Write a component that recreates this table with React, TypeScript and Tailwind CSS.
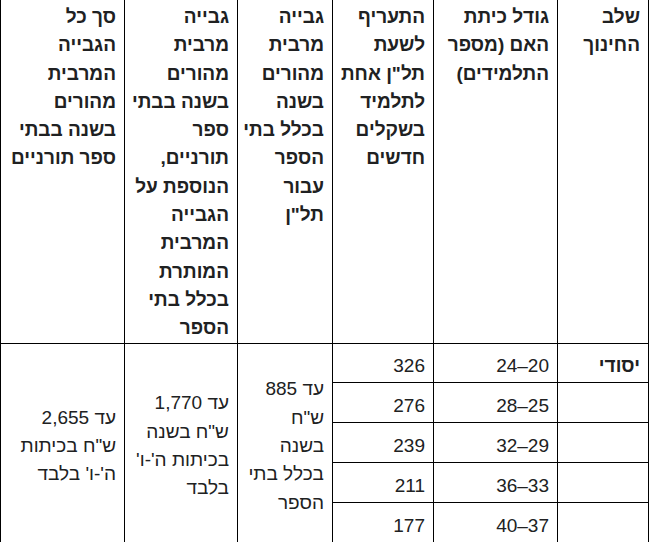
import React from "react";

const headers: string[][] = [
  ["שלב", "החינוך"],
  ["גודל כיתת", "האם (מספר", "התלמידים)"],
  ["התעריף", "לשעת", "תל\"ן אחת", "לתלמיד", "בשקלים", "חדשים"],
  ["גבייה", "מרבית", "מהורים", "בשנה", "בכלל בתי", "הספר", "עבור", "תל\"ן"],
  [
    "גבייה",
    "מרבית",
    "מהורים",
    "בשנה בבתי",
    "ספר",
    "תורניים,",
    "הנוספת על",
    "הגבייה",
    "המרבית",
    "המותרת",
    "בכלל בתי",
    "הספר",
  ],
  ["סך כל", "הגבייה", "המרבית", "מהורים", "בשנה בבתי", "ספר תורניים"],
];

const rows: [string, string][] = [
  ["20–24", "326"],
  ["25–28", "276"],
  ["29–32", "239"],
  ["33–36", "211"],
  ["37–40", "177"],
];

function Lines({ lines }: { lines: string[] }) {
  return (
    <>
      {lines.map((l, i) => (
        <React.Fragment key={i}>
          {l}
          {i < lines.length - 1 && <br />}
        </React.Fragment>
      ))}
    </>
  );
}

export default function App() {
  const th =
    "border border-black align-top text-right font-bold pt-[6px] pb-0 pr-[8px] pl-[4px] whitespace-nowrap";
  const tdBase =
    "border border-black align-middle text-right pt-[8.6px] pb-[2px] pr-[8px] pl-[4px] whitespace-nowrap";
  const td = tdBase + " font-normal";
  return (
    <div className="w-[650px] h-[542px] overflow-hidden bg-white">
      <table
        dir="rtl"
        className="table-fixed border-collapse w-[649px] -mt-[4px] text-[19px] leading-[28.3px] text-[#202122]"
        style={{ fontFamily: '"Liberation Sans", Arial, sans-serif' }}
      >
        <colgroup>
          <col className="w-[91px]" />
          <col className="w-[124px]" />
          <col className="w-[101px]" />
          <col className="w-[95px]" />
          <col className="w-[113px]" />
          <col className="w-[124px]" />
        </colgroup>
        <thead>
          <tr>
            {headers.map((h, i) => (
              <th key={i} className={th}>
                <Lines lines={h} />
              </th>
            ))}
          </tr>
        </thead>
        <tbody>
          {rows.map((r, i) => (
            <tr key={i}>
              <td className={i === 0 ? tdBase + " font-bold" : td}>
                {i === 0 ? "יסודי" : ""}
              </td>
              <td className={td}>{r[0]}</td>
              <td className={td}>{r[1]}</td>
              {i === 0 && (
                <>
                  <td rowSpan={5} className={td}>
                    <Lines lines={["עד 885", "ש\"ח", "בשנה", "בכלל בתי", "הספר"]} />
                  </td>
                  <td rowSpan={5} className={td}>
                    <Lines lines={["עד 1,770", "ש\"ח בשנה", "בכיתות ה'-ו'", "בלבד"]} />
                  </td>
                  <td rowSpan={5} className={td}>
                    <Lines lines={["עד 2,655", "ש\"ח בכיתות", "ה'-ו' בלבד"]} />
                  </td>
                </>
              )}
            </tr>
          ))}
        </tbody>
      </table>
    </div>
  );
}
